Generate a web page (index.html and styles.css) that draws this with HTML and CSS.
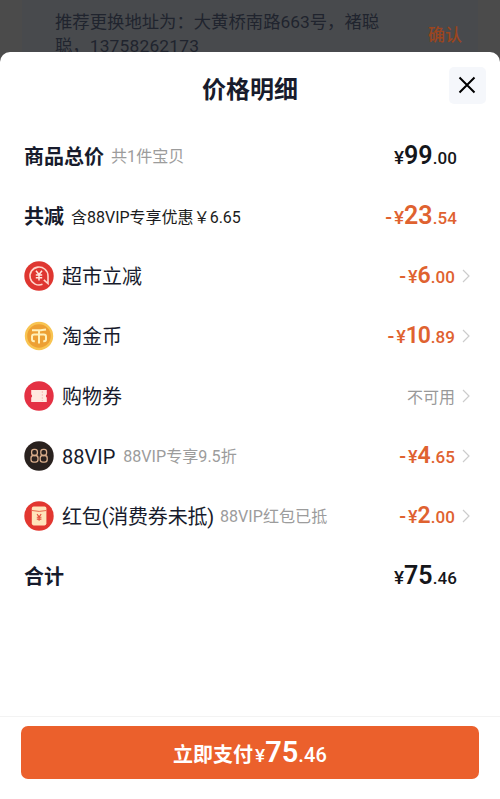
FILE: index.html
```html
<!DOCTYPE html>
<html lang="zh-CN">
<head>
<meta charset="utf-8">
<title>价格明细</title>
<link rel="stylesheet" href="styles.css">
</head>
<body>
<div class="page">
  <div class="address">
    <p class="address-text">推荐更换地址为：大黄桥南路663号，褚聪<br>聪，<span class="phone">13758262173</span></p>
    <span class="confirm">确认</span>
  </div>
  <section class="sheet">
    <header class="header">
      <h1 class="title">价格明细</h1>
      <button class="close" aria-label="关闭"><svg width="18" height="18" viewBox="0 0 18 18"><path d="M1.5 1.5 16.5 16.5M16.5 1.5 1.5 16.5"/></svg></button>
    </header>
    <div class="rows">
      <div class="row">
        <span class="label strong">商品总价</span><span class="note">共1件宝贝</span>
        <span class="price large"><span class="yen">¥</span><span class="int">99</span><span class="dec">.00</span></span>
      </div>
      <div class="row">
        <span class="label strong">共减</span><span class="note dark">含88VIP专享优惠<span class="wide-yen">￥</span>6.65</span>
        <span class="price large orange"><span class="minus">-</span><span class="yen">¥</span><span class="int">23</span><span class="dec">.54</span></span>
      </div>
      <div class="row item">
        <svg class="icon" viewBox="0 0 30 30"><circle cx="15" cy="15" r="14.7" fill="#df3630"/><path d="M18.5 23.3A9 9 0 1 1 24 15V22.5L19.8 18.8" fill="none" stroke="#ffd5ca" stroke-width="1.6"/><path d="m12 9.7 3 3.8 3-3.8M15 13.5v6M11.8 14h6.4M11.8 16.8h6.4" fill="none" stroke="#ffe8df" stroke-width="1.5"/></svg>
        <span class="label">超市立减</span>
        <span class="price orange"><span class="minus">-</span><span class="yen">¥</span><span class="int">6</span><span class="dec">.00</span></span>
        <svg class="chevron" viewBox="0 0 8 14"><path d="m1 1 6 6-6 6"/></svg>
      </div>
      <div class="row item">
        <svg class="icon" viewBox="0 0 30 30"><circle cx="15" cy="15" r="14.2" fill="#f8c451"/><circle cx="15" cy="15" r="11.8" fill="#eda033"/><path d="M8 9.3Q15 9.6 22 8.5M10.8 20.3H10q-2 0-2-2v-2.7q0-2.2 2.2-2.2h9.6q2.2 0 2.2 2.2v2.7q0 2-2 2h-.8M15 9.5v13" fill="none" stroke="#fff1ba" stroke-width="2"/></svg>
        <span class="label">淘金币</span>
        <span class="price orange"><span class="minus">-</span><span class="yen">¥</span><span class="int narrow">10</span><span class="dec">.89</span></span>
        <svg class="chevron" viewBox="0 0 8 14"><path d="m1 1 6 6-6 6"/></svg>
      </div>
      <div class="row item">
        <svg class="icon" viewBox="0 0 30 30"><circle cx="15" cy="15" r="14.7" fill="#e43143"/><path d="M7.2 9h15.6v4.5a1.7 1.7 0 0 0 0 3V21H7.2v-4.5a1.7 1.7 0 0 0 0-3z" fill="#ffe9df"/><path d="M18.3 10v10" stroke="#f5b5ad" stroke-width=".8" stroke-dasharray="2 1"/></svg>
        <span class="label">购物券</span>
        <span class="unavailable">不可用</span>
        <svg class="chevron" viewBox="0 0 8 14"><path d="m1 1 6 6-6 6"/></svg>
      </div>
      <div class="row item">
        <svg class="icon" viewBox="0 0 30 30"><circle cx="15" cy="15" r="14.7" fill="#29211e"/><g fill="none" stroke="#d9ad8b" stroke-width="1.3"><rect x="7.6" y="8.3" width="5.8" height="6.2" rx="2.4"/><rect x="7" y="14.5" width="7" height="6.7" rx="2.6"/><rect x="16.8" y="8.3" width="5.8" height="6.2" rx="2.4"/><rect x="16.2" y="14.5" width="7" height="6.7" rx="2.6"/></g></svg>
        <span class="label">88VIP</span><span class="note vip">88VIP专享9.5折</span>
        <span class="price orange"><span class="minus">-</span><span class="yen">¥</span><span class="int">4</span><span class="dec">.65</span></span>
        <svg class="chevron" viewBox="0 0 8 14"><path d="m1 1 6 6-6 6"/></svg>
      </div>
      <div class="row item">
        <svg class="icon" viewBox="0 0 30 30"><circle cx="15" cy="15" r="14.7" fill="#e23730"/><rect x="7.8" y="5.6" width="14.6" height="18.8" rx="1.8" fill="#ffe4bb"/><path d="M8 9.5q7.2 1.8 14.4 0" fill="none" stroke="#e8684e"/><path d="m13 13.2 2.1 2.6 2.1-2.6M15.1 15.8v4M12.8 16.2h4.6M12.8 18.1h4.6" fill="none" stroke="#e34e3d" stroke-width="1.1"/></svg>
        <span class="label tight">红包(消费券未抵)</span><span class="note">88VIP红包已抵</span>
        <span class="price orange"><span class="minus">-</span><span class="yen">¥</span><span class="int">2</span><span class="dec">.00</span></span>
        <svg class="chevron" viewBox="0 0 8 14"><path d="m1 1 6 6-6 6"/></svg>
      </div>
      <div class="row">
        <span class="label strong">合计</span>
        <span class="price large"><span class="yen">¥</span><span class="int">75</span><span class="dec">.46</span></span>
      </div>
    </div>
    <footer class="footer">
      <button class="pay"><span class="pay-label">立即支付</span><span class="price large"><span class="yen">¥</span><span class="int">75</span><span class="dec">.46</span></span></button>
    </footer>
  </section>
</div>
</body>
</html>
```
FILE: styles.css
```css
* { box-sizing: border-box; }
body { margin: 0; background: #4b4b4b; font-family: Roboto, "Noto Sans CJK SC", sans-serif; color: #171b2c; }
button { border: 0; padding: 0; font: inherit; }
.page { height: 799px; overflow: hidden; display: flex; flex-direction: column; background: #4b4b4b; }
.address { flex: none; height: 52px; margin: 0 22px; padding: 10px 16px 0 33px; display: flex; justify-content: space-between; background: #484a4d; }
.address-text { margin: 0; font-size: 17.35px; line-height: 24px; color: #20242e; white-space: nowrap; }
.phone { letter-spacing: .2px; }
.confirm { font-size: 17px; line-height: 24px; margin-top: 13px; color: #9b451e; font-weight: 500; }
.sheet { flex: 1; display: flex; flex-direction: column; background: #fff; border-radius: 10px 10px 0 0; z-index: 1; }
.header { height: 75px; flex: none; display: grid; grid-template-columns: 50px 1fr 50px; }
.title { grid-column: 2; margin: 20px 0 0; text-align: center; font-size: 24px; line-height: 36px; font-weight: 700; }
.close { width: 37px; height: 37px; margin-top: 15px; margin-left: -1px; padding: 0 1px 1px 0; background: #f5f7fb; border-radius: 5px; display: flex; align-items: center; justify-content: center; }
.close path { fill: none; stroke: #000; stroke-width: 2; }
.rows { flex: 1; padding: 0 43px 0 24px; }
.row { height: 60px; display: flex; align-items: center; white-space: nowrap; }
.item { margin-right: -13px; }
.icon { width: 30px; height: 30px; flex: none; margin: -2px 8px 0 0; }
.label { font-size: 20px; line-height: 30px; }
.strong { font-weight: 700; }
.tight { letter-spacing: -.2px; margin-right: -1px; }
.note { margin-left: 7px; padding-bottom: 1px; font-size: 16.1px; line-height: 24px; color: #9c9c9c; }
.vip { margin-left: 8px; }
.dark { color: #1b1c20; font-size: 16px; }
.wide-yen { font-family: "Noto Sans CJK SC", sans-serif; }
.price { margin-left: auto; padding-bottom: 1px; display: flex; align-items: baseline; font-weight: 700; line-height: 30px; color: #15161a; }
.yen { font-size: 18px; font-weight: 500; }
.int { font-size: 23px; font-weight: 600; }
.narrow { letter-spacing: -1.2px; margin-right: 1px; }
.dec { font-size: 17px; font-weight: 500; letter-spacing: .1px; }
.large .int { font-size: 25px; }
.large .yen { font-size: 19px; }
.minus { font-size: 20px; font-weight: 500; margin-right: 2px; }
.orange { color: #df6230; }
.unavailable { margin-left: auto; padding-bottom: 3px; font-size: 16px; color: #999; }
.chevron { width: 8px; height: 14px; margin: -2px 0 0 7px; flex: none; }
.chevron path { fill: none; stroke: #ccc; stroke-width: 1.2; }
.footer { height: 83px; flex: none; border-top: 1px solid #f3f3f3; padding: 9px 21px 0; }
.pay { width: 458px; height: 53px; padding-top: 1px; border-radius: 7px; background: #eb602c; color: #fff; display: flex; align-items: baseline; justify-content: center; line-height: 50px; }
.pay-label { font-size: 20px; font-weight: 700; margin-right: 2px; }
.pay .price { margin-left: 0; padding-bottom: 0; color: #fff; line-height: 50px; }
.pay .int { font-size: 29px; }
.pay .dec { font-size: 20px; }
```
